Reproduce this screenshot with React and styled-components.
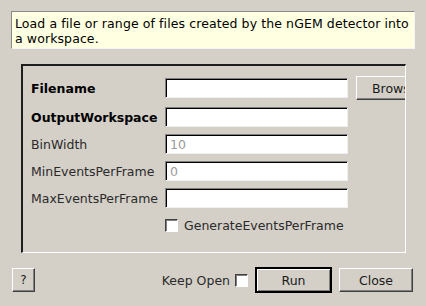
import React from 'react';
import styled, { createGlobalStyle } from 'styled-components';

const GlobalStyle = createGlobalStyle`
  html, body {
    margin: 0;
    padding: 0;
    background: #d4d0c8;
  }
  body {
    font-family: "DejaVu Sans", sans-serif;
    font-size: 12.5px;
    color: #1a1a1a;
  }
`;

const Dialog = styled.div`
  width: 426px;
  height: 306px;
  box-sizing: border-box;
  padding: 11px 11px 0 11px;
  display: flex;
  flex-direction: column;
  background: #d4d0c8;
`;

const Description = styled.div`
  height: 38px;
  box-sizing: border-box;
  padding: 4px 1px 0 3px;
  background: #ffffe1;
  border: 1px solid;
  border-color: #8a8a8a #f4f4f4 #f4f4f4 #8a8a8a;
  letter-spacing: 0.1px;
  line-height: 15px;
  white-space: nowrap;
  overflow: hidden;
  color: #000;
`;

const Group = styled.div`
  margin: 15px 9px 0 10px;
  height: 189px;
  box-sizing: border-box;
  border-style: solid;
  border-width: 2px 1px 1px 2px;
  border-color: #1e1e1e #ffffff #ffffff #1e1e1e;
  padding: 10px 0 0 8px;
  overflow: hidden;
  display: grid;
  grid-template-columns: 126px 183px 75px;
  grid-auto-rows: 20px;
  grid-template-rows: 24px;
  column-gap: 8px;
  row-gap: 7px;
  align-items: center;
`;

const Label = styled.div`
  font-weight: ${p => (p.$required ? 'bold' : 'normal')};
  color: ${p => (p.$required ? '#000' : '#2a2a2a')};
  white-space: nowrap;
`;

const Field = styled.input`
  height: 20px;
  width: 183px;
  box-sizing: border-box;
  margin: 0;
  padding: 0 4px;
  border: 1px solid;
  border-color: #808080 #f0f0f0 #f0f0f0 #808080;
  box-shadow: inset 1px 1px 0 #000;
  background: #fff;
  font-family: inherit;
  font-size: 12.5px;
  color: #000;
  outline: none;

  &::placeholder {
    color: #9a9a9a;
  }
`;

const Button = styled.button`
  height: 24px;
  width: ${p => p.$w || 75}px;
  box-sizing: border-box;
  margin: 0;
  padding: 0;
  background: #d4d0c8;
  border: 1px solid;
  border-color: #ffffff #404040 #404040 #ffffff;
  box-shadow: inset -1px -1px 0 #808080;
  font-family: inherit;
  font-size: 12.5px;
  color: #1a1a1a;
  white-space: nowrap;
  overflow: hidden;
`;

const BrowseButton = styled(Button)`
  text-align: left;
  padding-left: 15px;
`;

const DefaultButton = styled(Button)`
  height: 26px;
  width: 77px;
  outline: none;
  border-width: 2px;
  border-color: #000 #000 #000 #000;
  box-shadow: inset 1px 1px 0 #ffffff, inset -1px -1px 0 #808080;
`;

const Box = styled.span`
  display: inline-block;
  width: 13px;
  height: 13px;
  box-sizing: border-box;
  border: 1px solid;
  border-color: #404040 #ffffff #ffffff #404040;
  box-shadow: inset 1px 1px 0 #808080;
  background: #fff;
  flex: none;
`;

const CheckRow = styled.label`
  grid-column: 2 / span 2;
  display: flex;
  align-items: center;
  gap: 6px;
  color: #2a2a2a;
  white-space: nowrap;
`;

const Footer = styled.div`
  margin: 14px 2px 0 1px;
  display: flex;
  align-items: center;
`;

const HelpButton = styled(Button)`
  width: 23px;
  font-size: 12px;
`;

const Spacer = styled.div`
  flex: 1;
`;

const KeepOpen = styled.label`
  display: flex;
  align-items: center;
  gap: 5px;
  margin-right: 7px;
  color: #2a2a2a;
`;

const CloseButton = styled(Button)`
  margin-left: 7px;
`;

const fields = [
  { name: 'OutputWorkspace', required: true },
  { name: 'BinWidth', placeholder: '10' },
  { name: 'MinEventsPerFrame', placeholder: '0' },
  { name: 'MaxEventsPerFrame' },
];

export default function App() {
  return (
    <>
      <GlobalStyle />
      <Dialog>
        <Description>
          Load a file or range of files created by the nGEM detector into
          <br />
          a workspace.
        </Description>
        <Group>
          <Label $required>Filename</Label>
          <Field type="text" />
          <BrowseButton>Browse</BrowseButton>
          {fields.map(f => (
            <React.Fragment key={f.name}>
              <Label $required={f.required}>{f.name}</Label>
              <Field type="text" placeholder={f.placeholder} />
              <div />
            </React.Fragment>
          ))}
          <div />
          <CheckRow>
            <Box />
            GenerateEventsPerFrame
          </CheckRow>
        </Group>
        <Footer>
          <HelpButton>?</HelpButton>
          <Spacer />
          <KeepOpen>
            Keep Open
            <Box />
          </KeepOpen>
          <DefaultButton>Run</DefaultButton>
          <CloseButton $w={74}>Close</CloseButton>
        </Footer>
      </Dialog>
    </>
  );
}
